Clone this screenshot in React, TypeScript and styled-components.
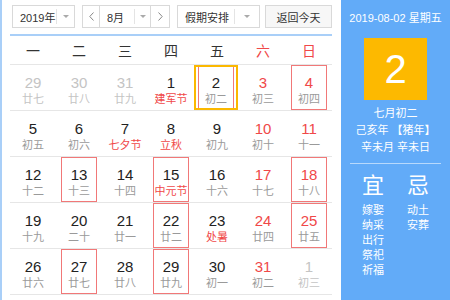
import styled, { createGlobalStyle, css } from 'styled-components';

const GlobalStyle = createGlobalStyle`
  html, body {
    margin: 0;
    padding: 0;
    background: #fff;
  }

  body {
    font-family: "Liberation Sans", "Noto Sans CJK SC", sans-serif;
  }
`;

const RED = '#f04848';

type Day = {
  day: number;
  lunar: string;
  other?: boolean;
  festival?: boolean;
  marked?: boolean;
  today?: boolean;
};

const WEEKS: Day[][] = [
  [
    { day: 29, lunar: '廿七', other: true },
    { day: 30, lunar: '廿八', other: true },
    { day: 31, lunar: '廿九', other: true },
    { day: 1, lunar: '建军节', festival: true },
    { day: 2, lunar: '初二', today: true, marked: true },
    { day: 3, lunar: '初三' },
    { day: 4, lunar: '初四', marked: true },
  ],
  [
    { day: 5, lunar: '初五' },
    { day: 6, lunar: '初六' },
    { day: 7, lunar: '七夕节', festival: true },
    { day: 8, lunar: '立秋', festival: true },
    { day: 9, lunar: '初九' },
    { day: 10, lunar: '初十' },
    { day: 11, lunar: '十一' },
  ],
  [
    { day: 12, lunar: '十二' },
    { day: 13, lunar: '十三', marked: true },
    { day: 14, lunar: '十四' },
    { day: 15, lunar: '中元节', festival: true, marked: true },
    { day: 16, lunar: '十六' },
    { day: 17, lunar: '十七' },
    { day: 18, lunar: '十八', marked: true },
  ],
  [
    { day: 19, lunar: '十九' },
    { day: 20, lunar: '二十' },
    { day: 21, lunar: '廿一' },
    { day: 22, lunar: '廿二', marked: true },
    { day: 23, lunar: '处暑', festival: true },
    { day: 24, lunar: '廿四' },
    { day: 25, lunar: '廿五', marked: true },
  ],
  [
    { day: 26, lunar: '廿六' },
    { day: 27, lunar: '廿七', marked: true },
    { day: 28, lunar: '廿八' },
    { day: 29, lunar: '廿九', marked: true },
    { day: 30, lunar: '初一' },
    { day: 31, lunar: '初二' },
    { day: 1, lunar: '初三', other: true },
  ],
];

const WEEKDAYS = ['一', '二', '三', '四', '五', '六', '日'];

const Frame = styled.div`
  display: flex;
  width: 450px;
  height: 300px;
  overflow: hidden;
  border-left: 2px solid #a9cff8;
  box-sizing: border-box;
`;

const Main = styled.div`
  width: 339px;
  flex: none;
  padding: 5px 9px 0 8px;
  box-sizing: border-box;
`;

const Toolbar = styled.div`
  display: flex;
  align-items: stretch;
  height: 23px;
  padding-left: 2px;
  padding-bottom: 6px;
  border-bottom: 2px solid #a9cff8;
`;

const Group = styled.div<{ $gap: number }>`
  display: flex;
  margin-left: ${(p) => p.$gap}px;
`;

const Select = styled.div<{ $width: number; $joined?: boolean }>`
  display: flex;
  width: ${(p) => p.$width}px;
  border: 1px solid #d9d9d9;
  background: #fff;
  box-sizing: border-box;
  font-size: 11px;
  color: #333;

  ${(p) =>
    p.$joined &&
    css`
      border-left: none;
      border-right: none;
    `}
`;

const SelectText = styled.span`
  flex: 1;
  display: flex;
  align-items: center;
  padding-left: 7px;
  border-right: 1px solid #e4e4e4;
  margin: 3px 0;
`;

const SelectArrow = styled.span<{ $width: number }>`
  width: ${(p) => p.$width}px;
  display: flex;
  align-items: center;
  justify-content: center;

  &::after {
    content: '';
    border-left: 3px solid transparent;
    border-right: 3px solid transparent;
    border-top: 3px solid #aaa;
  }
`;

const StepButton = styled.div<{ $width: number }>`
  width: ${(p) => p.$width}px;
  display: flex;
  align-items: center;
  justify-content: center;
  border: 1px solid #d9d9d9;
  box-sizing: border-box;
  background: #fff;
`;

const TodayButton = styled.div`
  width: 67px;
  margin-left: 5px;
  display: flex;
  align-items: center;
  justify-content: center;
  border: 1px solid #d9d9d9;
  box-sizing: border-box;
  background: #f7f7f7;
  font-size: 11px;
  color: #333;
`;

const Row = styled.div`
  display: grid;
  grid-template-columns: repeat(7, 46px);
  border-bottom: 1px solid #e6e6e6;
`;

const HeadCell = styled.div<{ $weekend: boolean }>`
  height: 28px;
  display: flex;
  align-items: center;
  justify-content: center;
  font-size: 14px;
  color: ${(p) => (p.$weekend ? RED : '#333')};
`;

const Cell = styled.div<{ $today?: boolean }>`
  height: 45px;
  display: flex;
  justify-content: center;

  ${(p) =>
    p.$today &&
    css`
      outline: 2px solid #fbb800;
      outline-offset: -2px;
      margin-right: 2px;
    `}
`;

const DayBox = styled.div<{ $marked?: boolean }>`
  width: 36px;
  height: 45px;
  box-sizing: border-box;
  padding-top: 8px;
  display: flex;
  flex-direction: column;
  align-items: center;
  border: 1px solid ${(p) => (p.$marked ? '#f17878' : 'transparent')};
`;

const DayNumber = styled.span<{ $tone: 'normal' | 'weekend' | 'other' }>`
  font-size: 15px;
  line-height: 18px;
  color: ${(p) => (p.$tone === 'weekend' ? RED : p.$tone === 'other' ? '#c4c4c4' : '#222')};
`;

const Lunar = styled.span<{ $festival?: boolean; $other?: boolean }>`
  font-size: 11px;
  line-height: 14px;
  white-space: nowrap;
  color: ${(p) => (p.$festival ? RED : p.$other ? '#c4c4c4' : '#9a9a9a')};
`;

const Side = styled.div`
  flex: 1;
  background: #62abf8;
  color: #fff;
  display: flex;
  flex-direction: column;
  align-items: center;
`;

const SideDate = styled.div`
  margin-top: 11px;
  font-size: 11px;
  line-height: 14px;
`;

const BigDay = styled.div`
  margin-top: 13px;
  width: 63px;
  height: 62px;
  background: #fdb900;
  display: flex;
  align-items: center;
  justify-content: center;
  font-size: 40px;
  line-height: 1;
`;

const LunarInfo = styled.div`
  margin-top: 5px;
  font-size: 11px;
  line-height: 17px;
  text-align: center;
`;

const Divider = styled.div`
  margin-top: 7px;
  width: 91px;
  height: 1px;
  background: rgba(255, 255, 255, 0.55);
`;

const Almanac = styled.div`
  margin-top: 10px;
  display: flex;
  gap: 23px;
`;

const AlmanacCol = styled.div`
  width: 22px;
  display: flex;
  flex-direction: column;
  align-items: center;
`;

const AlmanacTitle = styled.div`
  font-size: 22px;
  line-height: 24px;
  margin-bottom: 5px;
`;

const AlmanacItem = styled.div`
  font-size: 11px;
  line-height: 15px;
  white-space: nowrap;
`;

const Chevron = ({ dir }: { dir: 'left' | 'right' }) => (
  <svg width="5" height="9" viewBox="0 0 5 9">
    <polyline
      points={dir === 'left' ? '4.5,0.5 0.8,4.5 4.5,8.5' : '0.5,0.5 4.2,4.5 0.5,8.5'}
      fill="none"
      stroke="#888"
      strokeWidth="1"
    />
  </svg>
);

const App = () => {
  return (
    <>
      <GlobalStyle />
      <Frame>
        <Main>
          <Toolbar>
            <Select $width={63}>
              <SelectText>2019年</SelectText>
              <SelectArrow $width={17} />
            </Select>
            <Group $gap={7}>
              <StepButton $width={18}>
                <Chevron dir="left" />
              </StepButton>
              <Select $width={50} $joined>
                <SelectText>8月</SelectText>
                <SelectArrow $width={15} />
              </Select>
              <StepButton $width={20}>
                <Chevron dir="right" />
              </StepButton>
            </Group>
            <Group $gap={7}>
              <Select $width={83}>
                <SelectText>假期安排</SelectText>
                <SelectArrow $width={24} />
              </Select>
            </Group>
            <TodayButton>返回今天</TodayButton>
          </Toolbar>

          <Row>
            {WEEKDAYS.map((w, i) => (
              <HeadCell key={w} $weekend={i >= 5}>
                {w}
              </HeadCell>
            ))}
          </Row>

          {WEEKS.map((week, wi) => (
            <Row key={wi}>
              {week.map((d, di) => (
                <Cell key={di} $today={d.today}>
                  <DayBox $marked={d.marked}>
                    <DayNumber $tone={d.other ? 'other' : di >= 5 ? 'weekend' : 'normal'}>
                      {d.day}
                    </DayNumber>
                    <Lunar $festival={d.festival} $other={d.other}>
                      {d.lunar}
                    </Lunar>
                  </DayBox>
                </Cell>
              ))}
            </Row>
          ))}
        </Main>

        <Side>
          <SideDate>2019-08-02 星期五</SideDate>
          <BigDay>2</BigDay>
          <LunarInfo>
            <div>七月初二</div>
            <div>己亥年 【猪年】</div>
            <div>辛未月 辛未日</div>
          </LunarInfo>
          <Divider />
          <Almanac>
            <AlmanacCol>
              <AlmanacTitle>宜</AlmanacTitle>
              <AlmanacItem>嫁娶</AlmanacItem>
              <AlmanacItem>纳采</AlmanacItem>
              <AlmanacItem>出行</AlmanacItem>
              <AlmanacItem>祭祀</AlmanacItem>
              <AlmanacItem>祈福</AlmanacItem>
            </AlmanacCol>
            <AlmanacCol>
              <AlmanacTitle>忌</AlmanacTitle>
              <AlmanacItem>动土</AlmanacItem>
              <AlmanacItem>安葬</AlmanacItem>
            </AlmanacCol>
          </Almanac>
        </Side>
      </Frame>
    </>
  );
};

export default App;
